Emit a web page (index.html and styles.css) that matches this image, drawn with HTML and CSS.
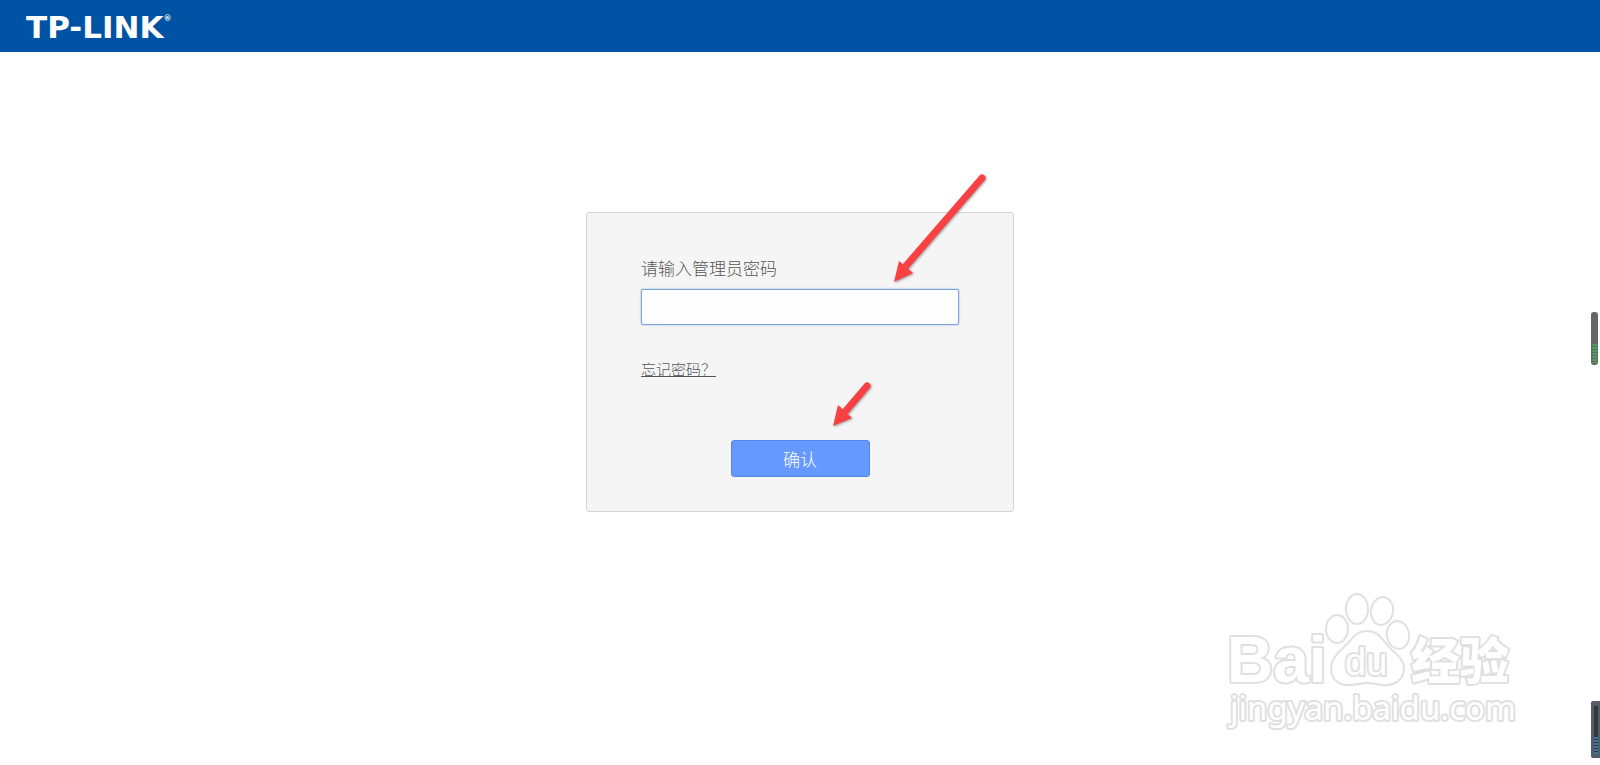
FILE: index.html
```html
<!DOCTYPE html>
<html lang="zh-CN">
<head>
<meta charset="utf-8">
<title>TP-LINK</title>
<link rel="stylesheet" href="styles.css">
</head>
<body>
<header class="topbar">
  <div class="brand">TP-LINK<sup class="reg">®</sup></div>
</header>
<main class="main">
  <form class="card">
    <label class="label" for="pwd">请输入管理员密码</label>
    <input class="field" id="pwd" type="password">
    <a class="forgot" href="#">忘记密码？</a>
    <button class="confirm" type="button">确认</button>
    <svg class="arrow arrow-long" width="98" height="114" viewBox="0 0 98 114" aria-hidden="true">
      <path d="M90 6 L13 95" stroke="#f94144" stroke-width="7" stroke-linecap="round"/>
      <path d="M2 110 L7 89 L21 101 Z" fill="#f94144"/>
    </svg>
    <svg class="arrow arrow-short" width="44" height="50" viewBox="0 0 44 50" aria-hidden="true">
      <path d="M36 6 L13 33" stroke="#f94144" stroke-width="7" stroke-linecap="round"/>
      <path d="M2 46 L7 25 L21 38 Z" fill="#f94144"/>
    </svg>
  </form>
</main>
<svg class="watermark" width="300" height="150" viewBox="0 0 300 150" aria-hidden="true">
  <g class="paw">
    <ellipse cx="117" cy="49" rx="11" ry="14"/>
    <ellipse cx="137" cy="29" rx="11" ry="15"/>
    <ellipse cx="162" cy="31" rx="11" ry="14" transform="rotate(10 162 31)"/>
    <ellipse cx="178" cy="55" rx="11" ry="14" transform="rotate(-8 178 55)"/>
    <path d="M147 51 C135 51 132 60 123 68 C115 75 111 81 111 89 C111 99 118 105 128 105 C136 105 140 103 147 103 C154 103 160 106 168 105 C178 104 184 97 184 88 C184 79 176 74 170 68 C162 60 159 51 147 51 Z"/>
  </g>
  <text class="wm-bai" x="7" y="102">Bai</text>
  <text class="wm-du" x="125" y="95">du</text>
  <text class="wm-cn" x="191" y="99">经验</text>
  <text class="wm-url" x="10" y="140">jingyan.baidu.com</text>
</svg>
<svg class="gauge gauge-mid" width="7" height="53" viewBox="0 0 7 53" aria-hidden="true">
  <rect width="7" height="53" rx="3" fill="#666"/>
  <path d="M4 32 V51" stroke="#48a060" stroke-width="5" stroke-dasharray="2 1"/>
</svg>
<svg class="gauge gauge-low" width="9" height="57" viewBox="0 0 9 57" aria-hidden="true">
  <rect width="12" height="57" rx="2" fill="#555c65"/>
  <rect x="3" y="5" width="4" height="48" fill="#303840"/>
  <path d="M5 36 V53" stroke="#3378a4" stroke-width="4" stroke-dasharray="2 1"/>
</svg>
</body>
</html>
```
FILE: styles.css
```css
* {
  box-sizing: border-box;
}
body {
  margin: 0;
  min-height: 100vh;
  position: relative;
  background: #fff;
  color: #555;
  font-family: "Liberation Sans", "Noto Sans CJK SC", sans-serif;
  font-weight: 300;
}
.topbar {
  display: flex;
  align-items: center;
  height: 52px;
  padding: 2px 26px 0;
  background: #0053a4;
}
.brand {
  display: flex;
  color: #fff;
  font: bold 31px/30px "DejaVu Sans", sans-serif;
}
.reg {
  font-size: 8px;
  line-height: 14px;
}
.main {
  display: flex;
  justify-content: center;
  padding: 160px 16px 48px;
}
.card {
  position: relative;
  display: flex;
  flex-direction: column;
  width: 100%;
  max-width: 428px;
  padding: 44px 54px 34px;
  background: #f5f5f5;
  border: 1px solid #d6d6d6;
  border-radius: 3px;
}
.label {
  font-size: 17px;
  line-height: 26px;
}
.field {
  height: 36px;
  margin-top: 6px;
  padding: 0 8px;
  background: #fdfdfd;
  border: 1px solid #7ea6dc;
  border-radius: 2px;
  box-shadow: 0 0 2px #7ea6dc;
  font-size: 17px;
  outline: none;
}
.forgot {
  align-self: flex-start;
  margin-top: 34px;
  color: #555;
  font-size: 15px;
  line-height: 22px;
}
.confirm {
  align-self: center;
  width: 139px;
  height: 37px;
  margin-top: 59px;
  padding: 0;
  background: #69f;
  border: 1px solid #5588e6;
  border-radius: 3px;
  color: #fff;
  font: inherit;
  font-size: 17px;
}
.arrow {
  position: absolute;
  fill: none;
  filter: drop-shadow(1px 1px 1px rgba(0, 0, 0, 0.35));
}
.arrow-long {
  top: -41px;
  left: 305px;
}
.arrow-short {
  top: 167px;
  left: 244px;
}
.watermark {
  position: absolute;
  right: 80px;
  bottom: 35px;
  fill: #fff;
  stroke: #e0e0e0;
  stroke-width: 4px;
  paint-order: stroke;
  stroke-linejoin: round;
}
.paw {
  stroke-width: 2px;
  paint-order: normal;
}
.wm-bai {
  font: bold 64px "Liberation Sans", sans-serif;
}
.wm-du {
  font: 38px "Liberation Sans", sans-serif;
}
.wm-cn {
  font: 900 49px "Noto Sans CJK SC", sans-serif;
}
.wm-url {
  font: 33px "Noto Sans", sans-serif;
}
.gauge {
  position: absolute;
}
.gauge-mid {
  top: 312px;
  right: 2px;
}
.gauge-low {
  right: 0;
  bottom: 7px;
}
```
